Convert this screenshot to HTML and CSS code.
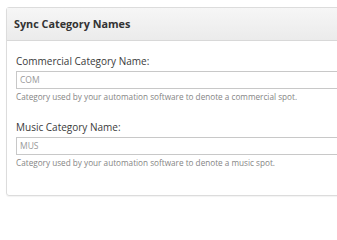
FILE: index.html
```html
<!DOCTYPE html>
<html>
<head>
<meta charset="utf-8">
<link rel="stylesheet" href="styles.css">
</head>
<body>
<div class="panel">
  <div class="panel-heading">Sync Category Names</div>
  <div class="panel-body">
    <div class="field">
      <label class="label">Commercial Category Name:</label>
      <div class="input">COM</div>
      <div class="help">Category used by your automation software to denote a commercial spot.</div>
    </div>
    <div class="field">
      <label class="label">Music Category Name:</label>
      <div class="input">MUS</div>
      <div class="help">Category used by your automation software to denote a music spot.</div>
    </div>
  </div>
</div>
</body>
</html>
```
FILE: styles.css
```css
html { overflow: hidden; }
html, body { margin: 0; padding: 0; background: #fff; }
body {
  font-family: "Open Sans", "Liberation Sans", sans-serif;
  padding: 7px 0 0 6px;
  overflow: hidden;
  width: 337px;
  height: 202px;
  box-sizing: border-box;
}
.panel {
  width: 340px;
  height: 189px;
  border: 1px solid #dcdcdc;
  border-radius: 3px;
  box-sizing: border-box;
  box-shadow: 0 1px 1px rgba(0,0,0,0.05);
}
.panel-heading {
  height: 33px;
  box-sizing: border-box;
  border-bottom: 1px solid #d8d8d8;
  background: linear-gradient(#f6f6f6, #ebebeb);
  padding: 0 0 0 7px;
  line-height: 31px;
  font-weight: bold;
  font-size: 10.8px;
  color: #333;
}
.panel-body {
  padding: 13px 0 0 9px;
}
.field { margin-bottom: 18px; }
.label {
  display: block;
  font-size: 10px;
  color: #3a3a3a;
  line-height: 14px;
  margin-bottom: 3px;
}
.input {
  height: 18px;
  box-sizing: border-box;
  border: 1px solid #c8c8c8;
  font-size: 8.5px;
  color: #999;
  line-height: 16px;
  padding: 0 0 0 3px;
  margin-bottom: 2px;
}
.help {
  font-size: 8.2px;
  color: #858585;
  line-height: 11px;
}
```
